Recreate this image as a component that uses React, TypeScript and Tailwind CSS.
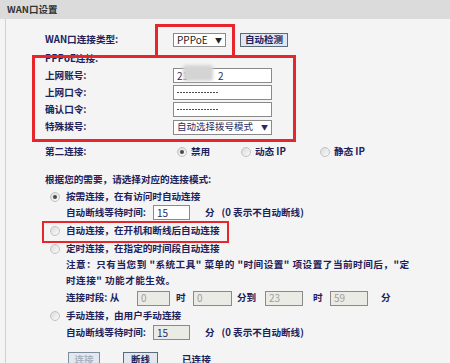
import React from "react";

const font = "font-['Noto_Sans_CJK_SC','Noto_Sans',sans-serif]";

function Radio({ checked = false }: { checked?: boolean }) {
  return (
    <span className="flex h-[10px] w-[10px] shrink-0 items-center justify-center rounded-full border border-[#c2c2c2] bg-gradient-to-br from-[#dadada] to-[#fbfbfb]">
      {checked && <span className="h-[4px] w-[4px] rounded-full bg-[#4a4a4a]" />}
    </span>
  );
}

function Field({
  width,
  children,
  disabled = false,
}: {
  width: string;
  children?: React.ReactNode;
  disabled?: boolean;
}) {
  return (
    <div
      className={`flex h-[15px] items-center border border-[#8a8a8a] px-[3px] text-[10px] font-normal leading-none ${width} ${
        disabled ? "bg-[#ebebe6] text-[#a0a0a0]" : "bg-white text-[#2a2a5e]"
      }`}
    >
      {children}
    </div>
  );
}

// masked password, drawn as a row of small dots
function Dots() {
  return (
    <div className="flex gap-[1.5px]">
      {Array.from({ length: 14 }).map((_, i) => (
        <span key={i} className="h-[1.5px] w-[1.5px] rounded-full bg-[#333]" />
      ))}
    </div>
  );
}

export default function App() {
  return (
    <div
      className={`relative h-[363px] w-[450px] overflow-hidden bg-[#f4f4f4] text-[9.6px] leading-none text-[#20205a] ${font}`}
    >
      <div className="flex h-[19px] items-center bg-[#dbdbdb] pl-[7px] text-[9.5px] font-bold text-[#333]">
        WAN口设置
      </div>

      <div className="ml-[5px] h-[344px] border-l border-[#d2d2d2] pt-[13px] font-bold">
        {/* connection type */}
        <div className="flex h-[16px] items-center">
          <span className="w-[167px] pl-[39px]">WAN口连接类型:</span>
          <div className="flex h-[14px] w-[53px] items-center justify-between border border-[#8a8a8a] bg-white px-[3px] text-[10px] font-normal text-[#222]">
            <span>PPPoE</span>
            <span className="text-[7px]">▼</span>
          </div>
          <button className="ml-[14px] h-[14px] w-[48px] border border-[#5c6b7a] bg-[#dfe7f0] text-[9.5px] font-bold text-[#20205a]">
            自动检测
          </button>
        </div>

        <div className="mt-[3px] flex h-[16px] items-center">
          <span className="pl-[39px]">PPPoE连接:</span>
        </div>

        <div className="flex h-[17px] items-center">
          <span className="w-[167px] pl-[39px]">上网账号:</span>
          <div className="relative">
            <Field width="w-[99px]">
              <span>21</span>
              <span className="w-[30px]" />
              <span>2</span>
            </Field>
            <span className="absolute left-[10px] top-[-3px] h-[16px] w-[30px] rounded-[3px] bg-[#d4d4d4] blur-[1.5px]" />
          </div>
        </div>
        <div className="flex h-[17px] items-center">
          <span className="w-[167px] pl-[39px]">上网口令:</span>
          <Field width="w-[99px]">
            <Dots />
          </Field>
        </div>
        <div className="flex h-[17px] items-center">
          <span className="w-[167px] pl-[39px]">确认口令:</span>
          <Field width="w-[99px]">
            <Dots />
          </Field>
        </div>
        <div className="flex h-[18px] items-center">
          <span className="w-[167px] pl-[39px]">特殊拨号:</span>
          <div className="flex h-[15px] w-[99px] items-center justify-between border border-[#8a8a8a] bg-white px-[3px] text-[9.5px] font-normal text-[#2a2a5e]">
            <span>自动选择拨号模式</span>
            <span className="text-[7px]">▼</span>
          </div>
        </div>

        {/* secondary connection */}
        <div className="mt-[8px] flex h-[16px] items-center">
          <span className="w-[171px] pl-[39px]">第二连接:</span>
          <div className="flex w-[64px] items-center gap-[4px]">
            <Radio checked />
            <span>禁用</span>
          </div>
          <div className="flex w-[79px] items-center gap-[4px]">
            <Radio />
            <span>动态 IP</span>
          </div>
          <div className="flex items-center gap-[4px]">
            <Radio />
            <span>静态 IP</span>
          </div>
        </div>

        <div className="mt-[12px] flex h-[16px] items-center pl-[39px]">
          根据您的需要，请选择对应的连接模式:
        </div>

        <div className="mt-[1px] flex h-[15px] items-center gap-[6px] pl-[44px]">
          <Radio checked />
          <span>按需连接，在有访问时自动连接</span>
        </div>
        <div className="flex h-[17px] items-center pl-[60px]">
          <span className="w-[87px]">自动断线等待时间:</span>
          <Field width="w-[37px]">15</Field>
          <span className="ml-[15px]">分</span>
          <span className="ml-[7px]">(0 表示不自动断线)</span>
        </div>

        <div className="flex h-[20px] items-center gap-[6px] pl-[44px]">
          <Radio />
          <span>自动连接，在开机和断线后自动连接</span>
        </div>

        <div className="flex h-[16px] items-center gap-[6px] pl-[44px]">
          <Radio />
          <span>定时连接，在指定的时间段自动连接</span>
        </div>
        <div className="flex h-[16px] items-center whitespace-pre pl-[60px] tracking-[0.5px]">
          {'注意：只有当您到 "系统工具" 菜单的 "时间设置" 项设置了当前时间后，"定'}
        </div>
        <div className="flex h-[16px] items-center whitespace-pre pl-[60px] tracking-[0.5px]">
          {'时连接" 功能才能生效。'}
        </div>
        <div className="flex h-[18px] items-center pl-[60px]">
          <span className="w-[71px]">连接时段: 从</span>
          <Field width="w-[33px]" disabled>
            0
          </Field>
          <span className="ml-[6px] w-[17px]">时</span>
          <Field width="w-[39px]" disabled>
            0
          </Field>
          <span className="ml-[5px] w-[28px]">分到</span>
          <Field width="w-[38px]" disabled>
            23
          </Field>
          <span className="ml-[10px] w-[17px]">时</span>
          <Field width="w-[38px]" disabled>
            59
          </Field>
          <span className="ml-[13px]">分</span>
        </div>

        <div className="flex h-[17px] items-center gap-[6px] pl-[44px]">
          <Radio />
          <span>手动连接，由用户手动连接</span>
        </div>
        <div className="flex h-[17px] items-center pl-[60px]">
          <span className="w-[87px]">自动断线等待时间:</span>
          <Field width="w-[37px]" disabled>
            <span className="text-[#2a2a5e]">15</span>
          </Field>
          <span className="ml-[15px]">分</span>
          <span className="ml-[7px]">(0 表示不自动断线)</span>
        </div>

        <div className="mt-[11px] flex h-[16px] items-center pl-[62px]">
          <button className="h-[16px] w-[32px] border border-[#7d8c9a] bg-[#e2e8ee] text-[9.5px] font-bold text-[#a8b2c2]">
            连接
          </button>
          <button className="ml-[23px] h-[16px] w-[35px] border border-[#5c6b7a] bg-[#e2e8ee] text-[9.5px] font-bold text-[#20205a]">
            断线
          </button>
          <span className="ml-[24px]">已连接</span>
        </div>
      </div>

      {/* highlight boxes */}
      <div className="absolute left-[155px] top-[24px] h-[34px] w-[80px] border-[3px] border-[#e5262b]" />
      <div className="absolute left-[32px] top-[55px] h-[87px] w-[264px] border-[3px] border-[#e5262b]" />
      <div className="absolute left-[42px] top-[221px] h-[22px] w-[187px] border-2 border-[#e5262b]" />
    </div>
  );
}
